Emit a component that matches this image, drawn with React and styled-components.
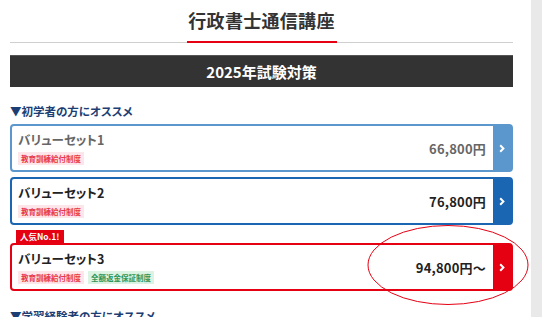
import React from 'react'
import styled, { createGlobalStyle } from 'styled-components'

const GlobalStyle = createGlobalStyle`
    html, body {
        margin: 0;
        padding: 0;
        background: #fff;
    }
    body {
        font-family: "Noto Sans CJK JP", "Noto Sans", sans-serif;
        color: #222;
        overflow: hidden;
    }
`

const plans = [
    { name: 'バリューセット1', price: '66,800円', tone: 'light', badges: ['subsidy'] },
    { name: 'バリューセット2', price: '76,800円', tone: 'blue', badges: ['subsidy'] },
    { name: 'バリューセット3', price: '94,800円〜', tone: 'red', badges: ['subsidy', 'refund'], popular: true },
]

const tones = {
    light: { border: '#5b97cc', text: '#666' },
    blue: { border: '#1a66b3', text: '#222' },
    red: { border: '#e50012', text: '#222' },
}

const badgeText = {
    subsidy: '教育訓練給付制度',
    refund: '全額返金保証制度',
}

const Chevron = () => (
    <svg width="6" height="9" viewBox="0 0 6 9">
        <polyline points="1.2,1.2 4.4,4.5 1.2,7.8" fill="none" stroke="#fff" strokeWidth="2" />
    </svg>
)

const PlanCard = ({ plan, children }) => {
    const tone = tones[plan.tone]
    return (
        <Card $border={tone.border}>
            <CardBody>
                <PlanName $color={tone.text}>{plan.name}</PlanName>
                <BadgeRow>
                    {plan.badges.map(b => (
                        <Badge key={b} $kind={b}>{badgeText[b]}</Badge>
                    ))}
                </BadgeRow>
            </CardBody>
            <Price $color={tone.text}>{plan.price}</Price>
            <ArrowCell $bg={tone.border}><Chevron /></ArrowCell>
            {children}
        </Card>
    )
}

const App = () => {
    return (
        <>
            <GlobalStyle />
            <Shell>
                <Main>
                    <PageTitle>行政書士通信講座</PageTitle>
                    <YearBar>2025年試験対策</YearBar>
                    <SectionHead>▼初学者の方にオススメ</SectionHead>
                    <PlanList>
                        <PlanCard plan={plans[0]} />
                        <PlanCard plan={plans[1]} />
                        <Popular>
                            <PopularTag>人気No.1!</PopularTag>
                            <PlanCard plan={plans[2]}>
                                <Circle width="162" height="82" viewBox="0 0 162 82">
                                    <ellipse cx="81" cy="41" rx="80" ry="39.5" fill="none" stroke="#e50012" strokeWidth="1" />
                                </Circle>
                            </PlanCard>
                        </Popular>
                    </PlanList>
                    <SectionHead $gap="16px">▼学習経験者の方にオススメ</SectionHead>
                </Main>
                <Track />
            </Shell>
        </>
    )
}

const Shell = styled.div`
    display: flex;
    height: 317px;
`

const Main = styled.main`
    width: 503px;
    padding-left: 10px;
    flex-shrink: 0;
`

const Track = styled.div`
    width: 11px;
    margin-left: 18px;
    height: 100%;
    background: #e9e9e9;
`

const PageTitle = styled.h1`
    position: relative;
    margin: 0;
    padding: 7px 0 8px;
    font-size: 18px;
    line-height: 27px;
    font-weight: 700;
    letter-spacing: 0.3px;
    color: #333;
    text-align: center;
    border-bottom: 1px solid #cfcfcf;

    &::after {
        content: '';
        position: absolute;
        left: 50%;
        bottom: -1px;
        width: 150px;
        height: 2px;
        margin-left: -75px;
        background: #e50012;
    }
`

const YearBar = styled.h2`
    margin: 12px 0 0;
    height: 32px;
    line-height: 32px;
    background: #333;
    border-top: 1px solid #555;
    box-sizing: border-box;
    color: #fff;
    font-size: 15px;
    font-weight: 700;
    text-align: center;
`

const SectionHead = styled.h3`
    margin: ${p => p.$gap || '15px'} 0 0;
    font-size: 11.5px;
    line-height: 18px;
    font-weight: 700;
    color: #1d3e73;
    font-feature-settings: "palt";
`

const PlanList = styled.div`
    display: flex;
    flex-direction: column;
    gap: 5px;
    margin-top: 4px;
`

const Popular = styled.div`
    display: flex;
    flex-direction: column;
    align-items: flex-start;
`

const PopularTag = styled.span`
    margin-left: 6px;
    padding: 0 4px;
    height: 13px;
    line-height: 13px;
    background: #e50012;
    color: #fff;
    font-size: 8.5px;
    font-weight: 700;
`

const Card = styled.div`
    position: relative;
    align-self: stretch;
    display: flex;
    align-items: stretch;
    border: 2px solid ${p => p.$border};
    border-radius: 4px;
    background: #fff;
`

const CardBody = styled.div`
    flex: 1;
    padding: 5px 6px 5px;
`

const PlanName = styled.div`
    font-size: 12.5px;
    line-height: 18px;
    font-weight: 700;
    color: ${p => p.$color};
    font-feature-settings: "palt";
`

const BadgeRow = styled.div`
    display: flex;
    gap: 4px;
    margin-top: 3px;
`

const Badge = styled.span`
    height: 13px;
    line-height: 13px;
    padding: 0 3px;
    font-size: 7.5px;
    font-weight: 700;
    background: ${p => (p.$kind === 'refund' ? '#dcf2e3' : '#fde6ea')};
    color: ${p => (p.$kind === 'refund' ? '#2f9657' : '#e8384a')};
`

const Price = styled.div`
    align-self: center;
    padding-right: 7px;
    font-size: 13px;
    font-weight: 700;
    letter-spacing: 0.2px;
    color: ${p => p.$color};
`

const ArrowCell = styled.div`
    width: 18px;
    display: flex;
    align-items: center;
    justify-content: center;
    background: ${p => p.$bg};
`

const Circle = styled.svg`
    position: absolute;
    left: 355px;
    top: -21px;
    pointer-events: none;
`

export default App
